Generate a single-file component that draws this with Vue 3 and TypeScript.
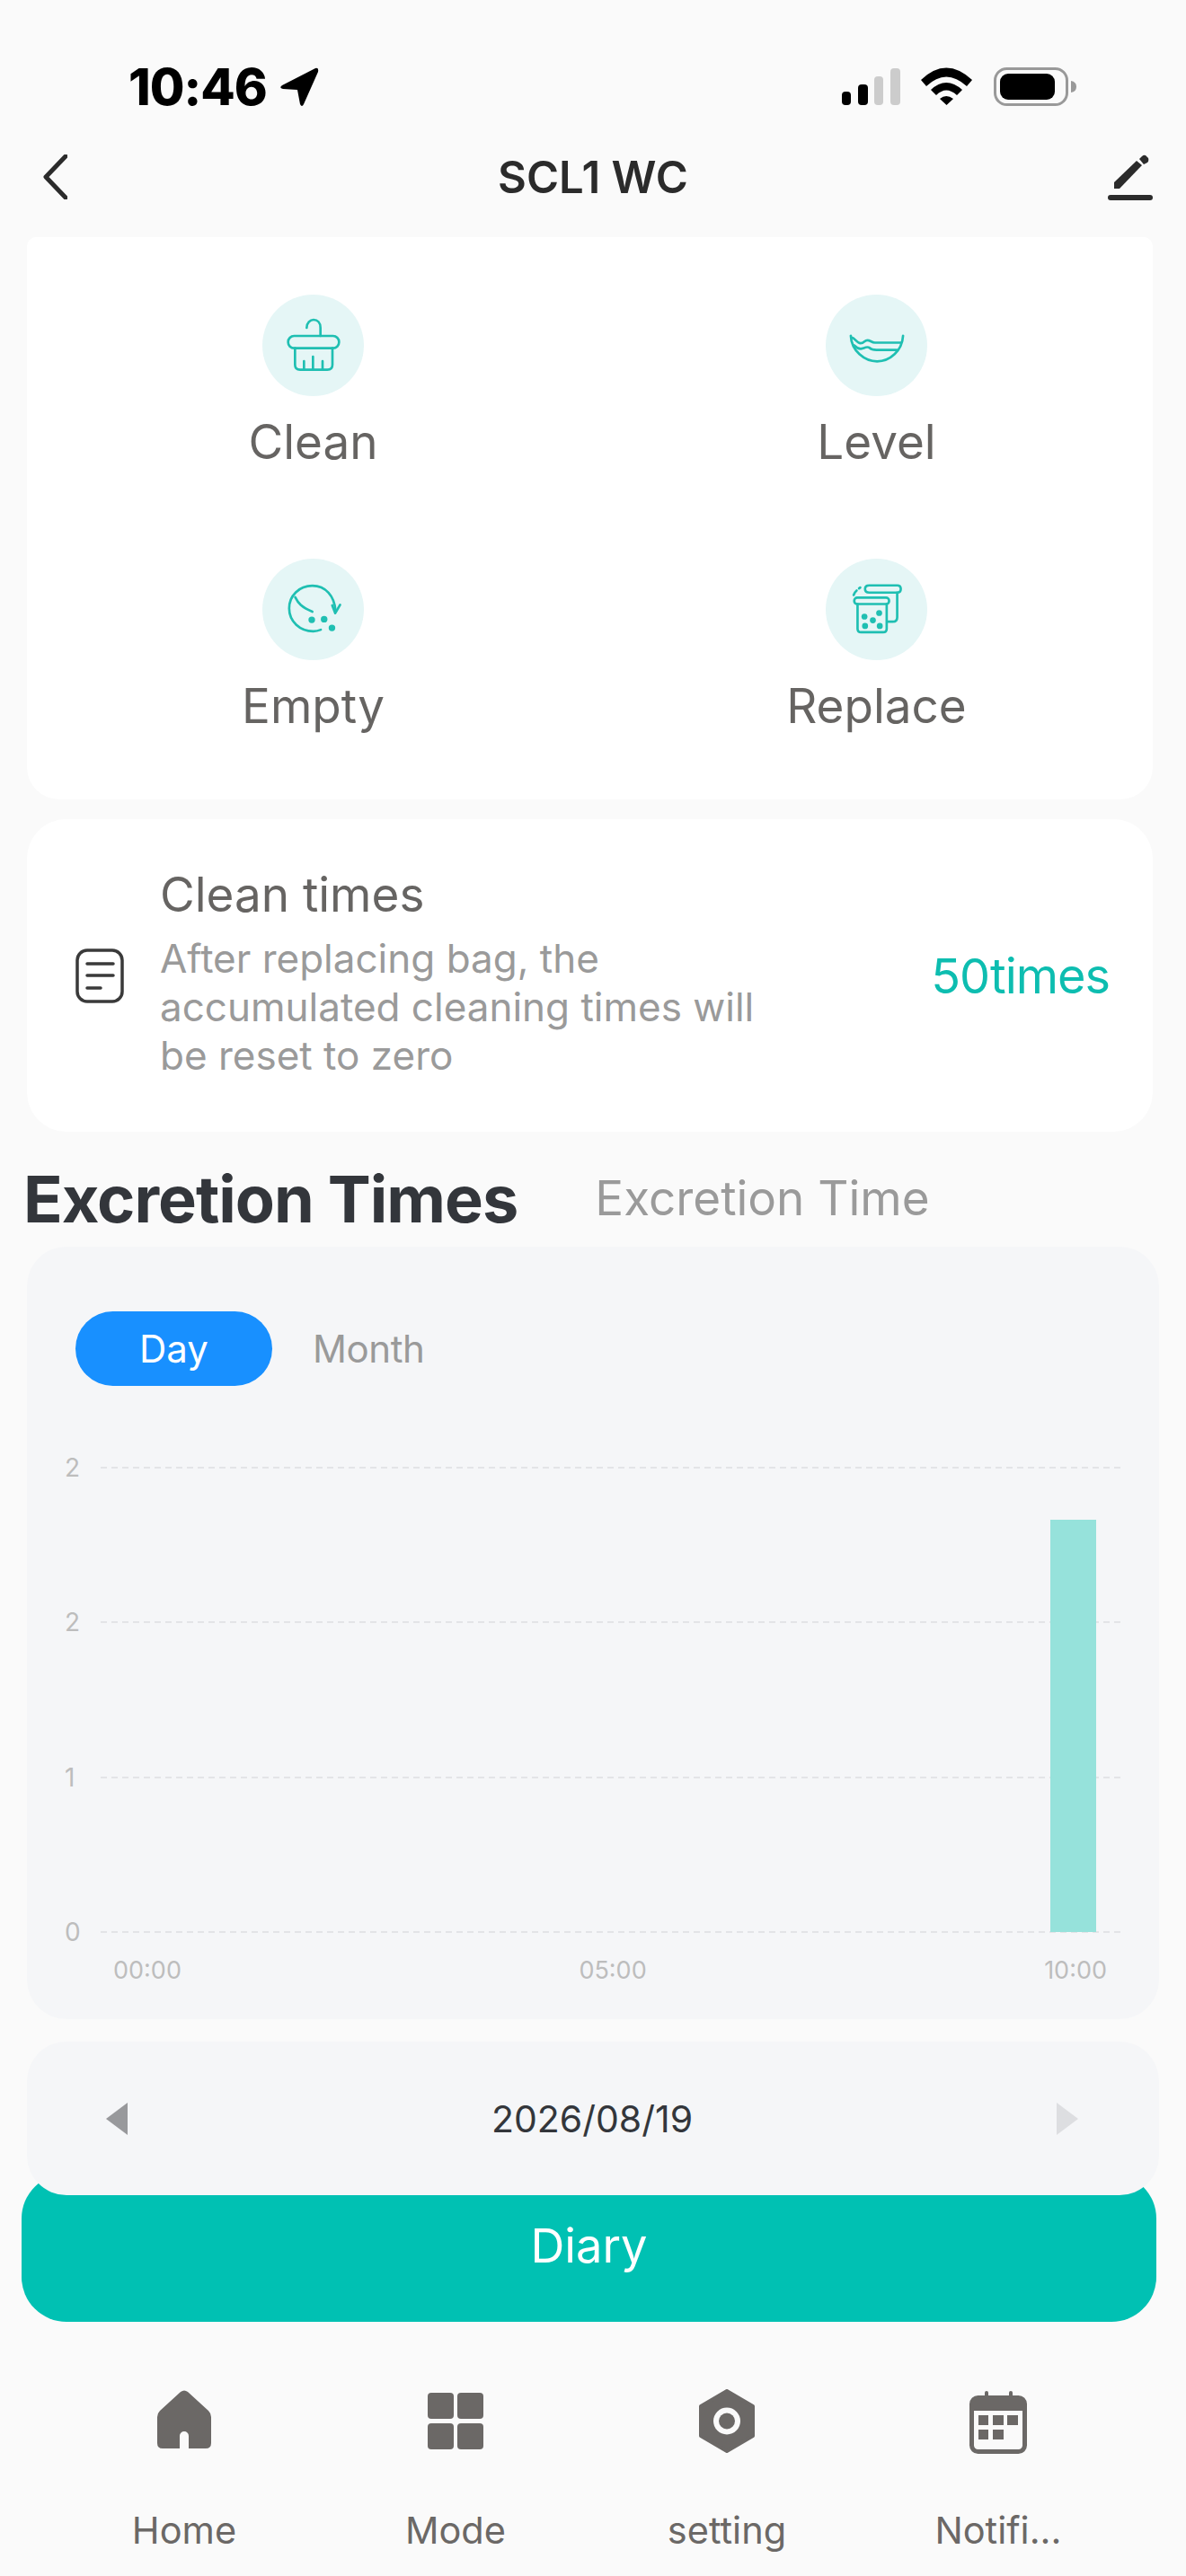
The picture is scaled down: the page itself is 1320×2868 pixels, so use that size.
<script setup lang="ts">
const yTicks = ['2', '2', '1', '0']
const xTicks = ['00:00', '05:00', '10:00']
</script>

<template>
  <div class="page">
    <div class="status-bar">
      <div class="time-wrap">
        <span class="time">10:46</span>
        <svg class="loc" viewBox="0 0 44 44"><path d="M40 1 Q44 0 43 5 L27 41 Q25 45 23 41 L20 25 L4 24 Q-1 23 3 20 Z" fill="#000" /></svg>
      </div>
      <div class="status-right">
        <svg class="signal" viewBox="0 0 65 41">
          <rect x="0" y="26" width="10" height="15" rx="4" fill="#000" />
          <rect x="18" y="18" width="11" height="23" rx="4" fill="#000" />
          <rect x="36" y="9" width="10" height="32" rx="4" fill="#ccc" />
          <rect x="54" y="0" width="11" height="41" rx="4" fill="#ccc" />
        </svg>
        <svg class="wifi" viewBox="0 0 57 42">
          <path d="M0 14 Q28 -13 57 14 L51 21 Q28 0 6 21 Z" fill="#000" />
          <path d="M11 25 Q28 9 46 25 L40 31 Q28 20 17 31 Z" fill="#000" />
          <path d="M21 35 Q28 29 36 35 L28.500 42 Z" fill="#000" />
        </svg>
        <svg class="battery" viewBox="0 0 92 43">
          <rect x="1.500" y="1.500" width="80" height="40" rx="13" fill="none" stroke="#999" stroke-width="3" />
          <rect x="7" y="7" width="61" height="29" rx="9" fill="#000" />
          <path d="M86 15 Q92 16 92 21.500 Q92 27 86 28 Z" fill="#999" />
        </svg>
      </div>
    </div>

    <div class="nav-bar">
      <svg class="back" viewBox="0 0 27 50"><path d="M25 2 L3 25 L25 48" fill="none" stroke="#2b2b2b" stroke-width="5" stroke-linecap="round" stroke-linejoin="round" /></svg>
      <span class="nav-title">SCL1 WC</span>
      <svg class="edit" viewBox="0 0 50 51">
        <path d="M7 38 L7 31 L32 7 L38 12 L13 38 Z" fill="#2b2b2b" />
        <path d="M35 5 L38 2 Q40 0 42 1 L45 4 Q46 7 44 9 L40 11 Z" fill="#2b2b2b" />
        <rect x="0" y="45" width="50" height="6" rx="3" fill="#2b2b2b" />
      </svg>
    </div>

    <div class="action-card">
      <div class="action">
        <div class="circle">
          <svg viewBox="216 84 339 339">
            <g fill="none" stroke="#1fbfb2" stroke-width="8" stroke-linecap="round" stroke-linejoin="round">
              <path d="M364 195 C364 178 376 168 387 168 C400 168 410 178 410 195 L410 222" />
              <rect x="302" y="222" width="170" height="41" rx="20" />
              <path d="M325 263 L325 318 Q325 335 342 335 L433 335 Q450 335 450 318 L450 263" />
              <path d="M355 306 L355 335 M385 291 L385 335 M417 306 L417 335" />
            </g>
          </svg>
        </div>
        <span class="action-label">Clean</span>
      </div>
      <div class="action">
        <div class="circle">
          <svg viewBox="207 84 336 336">
            <g fill="none" stroke="#1fbfb2" stroke-width="8" stroke-linecap="round" stroke-linejoin="round">
              <path d="M290 220 C292 270 335 305 377 305 C420 305 460 270 463 220" />
              <path d="M292 226 C303 226 310 245 322 245 C335 245 335 235 345 235 C355 235 358 243 370 243 L456 243" />
              <path d="M301 252 C311 262 320 266 330 262 C340 258 345 255 352 260 C358 266 365 267 375 267 L442 267" />
            </g>
          </svg>
        </div>
        <span class="action-label">Level</span>
      </div>
      <div class="action">
        <div class="circle">
          <svg viewBox="216 67 337 337">
            <g fill="none" stroke="#1fbfb2" stroke-width="8" stroke-linecap="round" stroke-linejoin="round">
              <path d="M459 242 C456 190 425 157 382 157 C338 157 305 190 305 232 C305 275 340 308 385 308 Q398 308 410 303" />
              <path d="M448 222 L458 248 L474 220" />
              <path d="M325 195 C335 215 345 228 382 243" />
            </g>
            <circle cx="380" cy="270" r="11" fill="#1fbfb2" />
            <circle cx="421" cy="268" r="11" fill="#1fbfb2" />
            <circle cx="447" cy="297" r="11" fill="#1fbfb2" />
          </svg>
        </div>
        <span class="action-label">Empty</span>
      </div>
      <div class="action">
        <div class="circle">
          <svg viewBox="207 67 338 338">
            <g fill="none" stroke="#1fbfb2" stroke-width="8" stroke-linecap="round" stroke-linejoin="round">
              <rect x="302" y="197" width="116" height="21" rx="10" />
              <path d="M313 218 L313 300 Q313 312 325 312 L398 312 Q410 312 410 300 L410 218" />
              <path d="M352 180 Q338 180 338 168 Q338 156 352 156 L445 156 Q457 156 457 168 Q457 180 445 180 L352 180" />
              <path d="M445 180 L445 262 Q445 277 430 277 L413 277" />
              <path d="M300 188 Q304 178 310 173" />
              <path d="M318 166 L322 163" />
            </g>
            <circle cx="336" cy="260" r="10" fill="#1fbfb2" />
            <circle cx="385" cy="248" r="10" fill="#1fbfb2" />
            <circle cx="364" cy="272" r="10" fill="#1fbfb2" />
            <circle cx="338" cy="291" r="10" fill="#1fbfb2" />
            <circle cx="387" cy="291" r="10" fill="#1fbfb2" />
          </svg>
        </div>
        <span class="action-label">Replace</span>
      </div>
    </div>

    <div class="times-card">
      <svg class="doc" viewBox="0 0 54 61">
        <rect x="2" y="2" width="50" height="57" rx="11" fill="none" stroke="#3a3a3a" stroke-width="3.500" />
        <path d="M13 17 H42 M13 30 H42 M13 44 H28" fill="none" stroke="#3a3a3a" stroke-width="3.500" stroke-linecap="round" />
      </svg>
      <div class="times-text">
        <div class="times-title">Clean times</div>
        <div class="times-desc">After replacing bag, the accumulated cleaning times will be reset to zero</div>
      </div>
      <span class="times-value">50times</span>
    </div>

    <div class="section-tabs">
      <span class="tab-active">Excretion Times</span>
      <span class="tab-idle">Excretion Time</span>
    </div>

    <div class="chart-card">
      <div class="range">
        <span class="range-on">Day</span>
        <span class="range-off">Month</span>
      </div>
      <div class="chart">
        <div v-for="(tick, i) in yTicks" :key="i" class="chart-row">
          <span class="tick">{{ tick }}</span>
          <div class="grid-line"></div>
        </div>
        <div class="bar"></div>
      </div>
      <div class="x-axis">
        <span v-for="t in xTicks" :key="t">{{ t }}</span>
      </div>
    </div>

    <div class="date-card">
      <svg class="arrow" viewBox="0 0 24 36"><path d="M24 0 V36 L0 18 Z" fill="#98999c" /></svg>
      <span class="date">2026/08/19</span>
      <svg class="arrow" viewBox="0 0 24 36"><path d="M0 0 V36 L24 18 Z" fill="#dddee1" /></svg>
    </div>

    <button class="diary">Diary</button>

    <div class="tabbar">
      <div class="tab">
        <svg class="tab-icon" viewBox="0 2 60 72"><path d="M26 5 Q30 2 34 5 L57 26 Q60 29 60 33 L60 62 Q60 68 54 68 L35 68 L35 54 A5 5 0 0 0 25 54 L25 68 L6 68 Q0 68 0 62 L0 33 Q0 29 3 26 Z" fill="#6b6866" /></svg>
        <span>Home</span>
      </div>
      <div class="tab">
        <svg class="tab-icon" viewBox="0 0 62 72">
          <rect x="0" y="4" width="29" height="29" rx="4" fill="#6b6866" />
          <rect x="33" y="4" width="29" height="29" rx="4" fill="#6b6866" />
          <rect x="0" y="38" width="29" height="29" rx="4" fill="#6b6866" />
          <rect x="33" y="38" width="29" height="29" rx="4" fill="#6b6866" />
        </svg>
        <span>Mode</span>
      </div>
      <div class="tab">
        <svg class="tab-icon" viewBox="0 0 62 72">
          <path d="M31 2 L60 19 V52 L31 69 L2 52 V19 Z" fill="#6b6866" stroke="#6b6866" stroke-width="4" stroke-linejoin="round" />
          <circle cx="31" cy="35.500" r="15" fill="#fafafa" />
          <circle cx="31" cy="35.500" r="9" fill="#6b6866" />
        </svg>
        <span>setting</span>
      </div>
      <div class="tab">
        <svg class="tab-icon" viewBox="0 -2 64 72">
          <rect x="17" y="0" width="4" height="10" rx="2" fill="#6b6866" />
          <rect x="44" y="0" width="4" height="10" rx="2" fill="#6b6866" />
          <rect x="2.500" y="7.500" width="59" height="60" rx="7" fill="none" stroke="#6b6866" stroke-width="5" />
          <path d="M2 22 V12 Q2 6 9 6 H55 Q62 6 62 12 V22 Z" fill="#6b6866" />
          <rect x="10" y="27" width="11" height="11" fill="#6b6866" />
          <rect x="26" y="27" width="12" height="11" fill="#6b6866" />
          <rect x="42" y="27" width="12" height="11" fill="#6b6866" />
          <rect x="10" y="43" width="11" height="11" fill="#6b6866" />
          <rect x="26" y="43" width="12" height="11" fill="#6b6866" />
        </svg>
        <span>Notifi...</span>
      </div>
    </div>
  </div>
</template>

<style>
html,
body {
  margin: 0;
  background: #fafafa;
}
</style>

<style scoped>
.page {
  width: 1320px;
  height: 2868px;
  overflow: hidden;
  background: #fafafa;
  font-family: Inter, "Liberation Sans", sans-serif;
  display: flex;
  flex-direction: column;
}

.status-bar {
  height: 138px;
  box-sizing: border-box;
  padding: 75px 122px 0 143px;
  display: flex;
  justify-content: space-between;
  align-items: flex-start;
}

.time-wrap {
  display: flex;
  align-items: center;
  gap: 14px;
}

.time {
  font-size: 56px;
  line-height: 44px;
  font-weight: 800;
  color: #000;
  letter-spacing: -1px;
}

.loc {
  width: 44px;
  height: 44px;
}

.status-right {
  display: flex;
  align-items: flex-start;
}

.signal {
  width: 65px;
  height: 41px;
  margin-top: 1px;
  margin-right: 23px;
}

.wifi {
  width: 57px;
  height: 42px;
  margin-right: 24px;
}

.battery {
  width: 92px;
  height: 43px;
}

.nav-bar {
  height: 118px;
  margin-bottom: 8px;
  box-sizing: border-box;
  padding: 0 37px 0 48px;
  display: flex;
  align-items: center;
}

.back {
  width: 27px;
  height: 50px;
  margin-right: 35px;
}

.edit {
  width: 50px;
  height: 51px;
  margin-left: 23px;
}

.nav-title {
  flex: 1;
  text-align: center;
  font-size: 49px;
  font-weight: 600;
  color: #2b2b2b;
}

.action-card {
  margin: 0 37px 0 30px;
  height: 626px;
  box-sizing: border-box;
  background: #fff;
  border-radius: 10px 10px 36px 36px;
  display: grid;
  grid-template-columns: 627px 627px;
  grid-auto-rows: 294px;
  padding: 64px 0 0 5px;
}

.action {
  display: flex;
  flex-direction: column;
  align-items: center;
}

.circle {
  width: 113px;
  height: 113px;
  border-radius: 50%;
  background: #e5f6f6;
}

.circle svg {
  display: block;
  width: 113px;
  height: 113px;
}

.action-label {
  margin-top: 18px;
  font-size: 53px;
  line-height: 66px;
  color: #666462;
}

.times-card {
  margin: 22px 37px 0 30px;
  height: 348px;
  box-sizing: border-box;
  background: #fff;
  border-radius: 44px;
  padding: 0 48px 0 54px;
  display: flex;
  align-items: center;
}

.doc {
  width: 54px;
  height: 61px;
  flex: none;
}

.times-text {
  margin-left: 40px;
  width: 680px;
  margin-top: -5px;
}

.times-title {
  font-size: 53px;
  line-height: 62px;
  color: #666462;
  margin-bottom: 13px;
}

.times-desc {
  font-size: 44px;
  line-height: 54px;
  color: #9a9a9a;
}

.times-value {
  margin-left: auto;
  font-size: 54px;
  letter-spacing: -1px;
  color: #0dbdb0;
}

.section-tabs {
  margin: 28px 0 8px 26px;
  height: 92px;
  display: flex;
  align-items: center;
  gap: 86px;
}

.tab-active {
  font-size: 72px;
  font-weight: 700;
  color: #33363b;
  letter-spacing: -1px;
}

.tab-idle {
  font-size: 53px;
  color: #9a9a9a;
}

.chart-card {
  margin: 0 30px;
  height: 860px;
  box-sizing: border-box;
  background: #f5f6f8;
  border-radius: 44px;
  padding: 72px 42px 0 54px;
}

.range {
  display: flex;
  align-items: center;
}

.range-on {
  width: 219px;
  height: 83px;
  border-radius: 42px;
  background: #1890ff;
  color: #fff;
  font-size: 42px;
  line-height: 83px;
  text-align: center;
}

.range-off {
  margin-left: 45px;
  font-size: 42px;
  letter-spacing: -0.400px;
  color: #9a9a9a;
}

.chart {
  margin-top: 74px;
  position: relative;
  display: flex;
  flex-direction: column;
  gap: 138.330px;
}

.chart-row {
  height: 34px;
  display: flex;
  align-items: center;
}

.tick {
  width: 28px;
  font-size: 28px;
  line-height: 34px;
  color: #bdbdbd;
  margin-left: -12px;
}

.grid-line {
  flex: 1;
  height: 2px;
  margin-left: 12px;
  background: repeating-linear-gradient(90deg, #e3e4e7 0 7px, transparent 7px 12px);
}

.bar {
  position: absolute;
  right: 28px;
  bottom: 17px;
  width: 51px;
  height: 459px;
  background: #96e2db;
}

.x-axis {
  margin: 9px 16px 0 42px;
  display: flex;
  justify-content: space-between;
  font-size: 27px;
  line-height: 34px;
  color: #bdbdbd;
}

.date-card {
  margin: 25px 30px 0;
  height: 171px;
  box-sizing: border-box;
  background: #f5f6f8;
  border-radius: 44px;
  padding: 0 90px 0 88px;
  display: flex;
  align-items: center;
  justify-content: space-between;
  position: relative;
  z-index: 1;
}

.arrow {
  width: 24px;
  height: 36px;
}

.date {
  font-size: 41px;
  color: #33363b;
}

.diary {
  margin: -24px 33px 0 24px;
  height: 165px;
  width: 1263px;
  box-sizing: border-box;
  border: none;
  background: #00c1b3;
  border-radius: 50px;
  color: #fff;
  font-family: inherit;
  font-size: 52.500px;
  padding: 0 0 6px;
}

.tabbar {
  margin-top: 75px;
  padding: 0 56px 0 54px;
  display: grid;
  grid-template-columns: repeat(4, 302px);
}

.tab {
  display: flex;
  flex-direction: column;
  align-items: center;
  font-size: 41.500px;
  color: #6b6866;
}

.tab-icon {
  height: 72px;
}

.tab span {
  margin-top: 60px;
}
</style>
